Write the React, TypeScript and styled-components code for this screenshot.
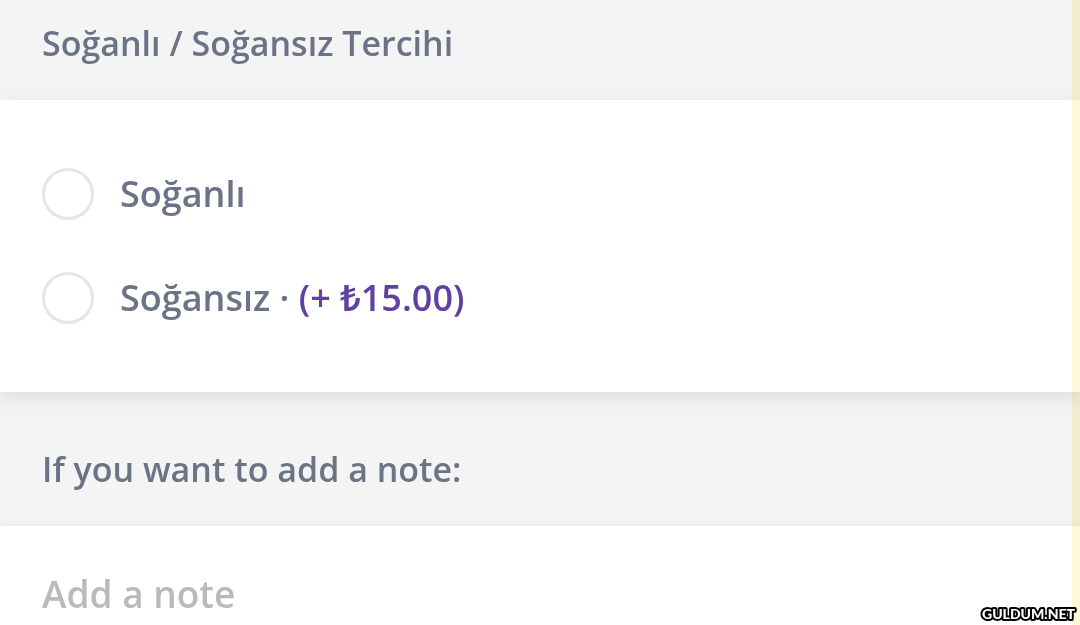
import React from "react";
import styled, { createGlobalStyle } from "styled-components";

const GlobalStyle = createGlobalStyle`
  * { box-sizing: border-box; }
  body {
    margin: 0;
    background: #fff;
    font-family: "Open Sans", "Noto Sans", sans-serif;
    font-weight: 600;
    color: #6a7486;
  }
`;

const Page = styled.main`
  position: relative;
  display: flex;
  flex-direction: column;
  min-height: 100vh;
  overflow: hidden;
`;

const Band = styled.header<{ $top: number }>`
  padding: ${(p) => p.$top}px 42px 33px;
  background: #f4f4f4;
`;

const Heading = styled.h2`
  display: block;
  margin: 0;
  font-size: 34px;
  line-height: 48px;
  font-weight: 600;
`;

const Options = styled.section`
  position: relative;
  display: flex;
  flex-direction: column;
  gap: 52px;
  padding: 68px 42px;
  background: #fff;
  box-shadow: 0 6px 16px 2px #dde2e7;
`;

const Option = styled.label`
  display: flex;
  align-items: center;
  gap: 26px;
  font-size: 36px;
  line-height: 52px;
`;

const Radio = styled.input`
  appearance: none;
  width: 52px;
  height: 52px;
  margin: 0;
  border: 3px solid #e6e6ea;
  border-radius: 50%;
  background: #fff;

  &:checked {
    border: 14px solid #6040a0;
  }
`;

const Price = styled.span`
  color: #6040a0;
`;

const NoteArea = styled.section`
  position: relative;
  flex: 1;
  padding: 42px 42px 4px;
  background: #fff;
  box-shadow: 0 0 6px #d9dde4;
`;

const Note = styled.input`
  display: block;
  width: 100%;
  height: 52px;
  padding: 0;
  border: 0;
  outline: 0;
  background: transparent;
  font: inherit;
  font-size: 37px;
  line-height: 52px;
  color: inherit;

  &::placeholder {
    color: #bababa;
    opacity: 1;
  }
`;

const Edge = styled.div`
  position: absolute;
  inset: 0 0 0 auto;
  width: 8px;
  background: #fff7da;
  mix-blend-mode: multiply;
  pointer-events: none;
`;

const Watermark = styled.svg`
  position: absolute;
  right: 0;
  bottom: 0;
  width: 102px;
  height: 22px;
`;

export default function App() {
  return (
    <Page>
      <GlobalStyle />
      <Band $top={19}>
        <Heading>Soğanlı / Soğansız Tercihi</Heading>
      </Band>
      <Options>
        <Option>
          <Radio type="radio" name="onion" />
          <span>Soğanlı</span>
        </Option>
        <Option>
          <Radio type="radio" name="onion" />
          <span>
            Soğansız · <Price>(+ ₺15.00)</Price>
          </span>
        </Option>
      </Options>
      <Band $top={53}>
        <Heading as="label" htmlFor="note">
          If you want to add a note:
        </Heading>
      </Band>
      <NoteArea>
        <Note id="note" placeholder="Add a note" />
      </NoteArea>
      <Edge />
      <Watermark>
        <text
          x="4"
          y="16"
          fontFamily="Lato, sans-serif"
          fontSize="14"
          fontWeight="900"
          fill="#fff"
          stroke="#000"
          strokeWidth="4"
          strokeLinejoin="round"
          paintOrder="stroke"
        >
          GULDUM.NET
        </text>
      </Watermark>
    </Page>
  );
}
